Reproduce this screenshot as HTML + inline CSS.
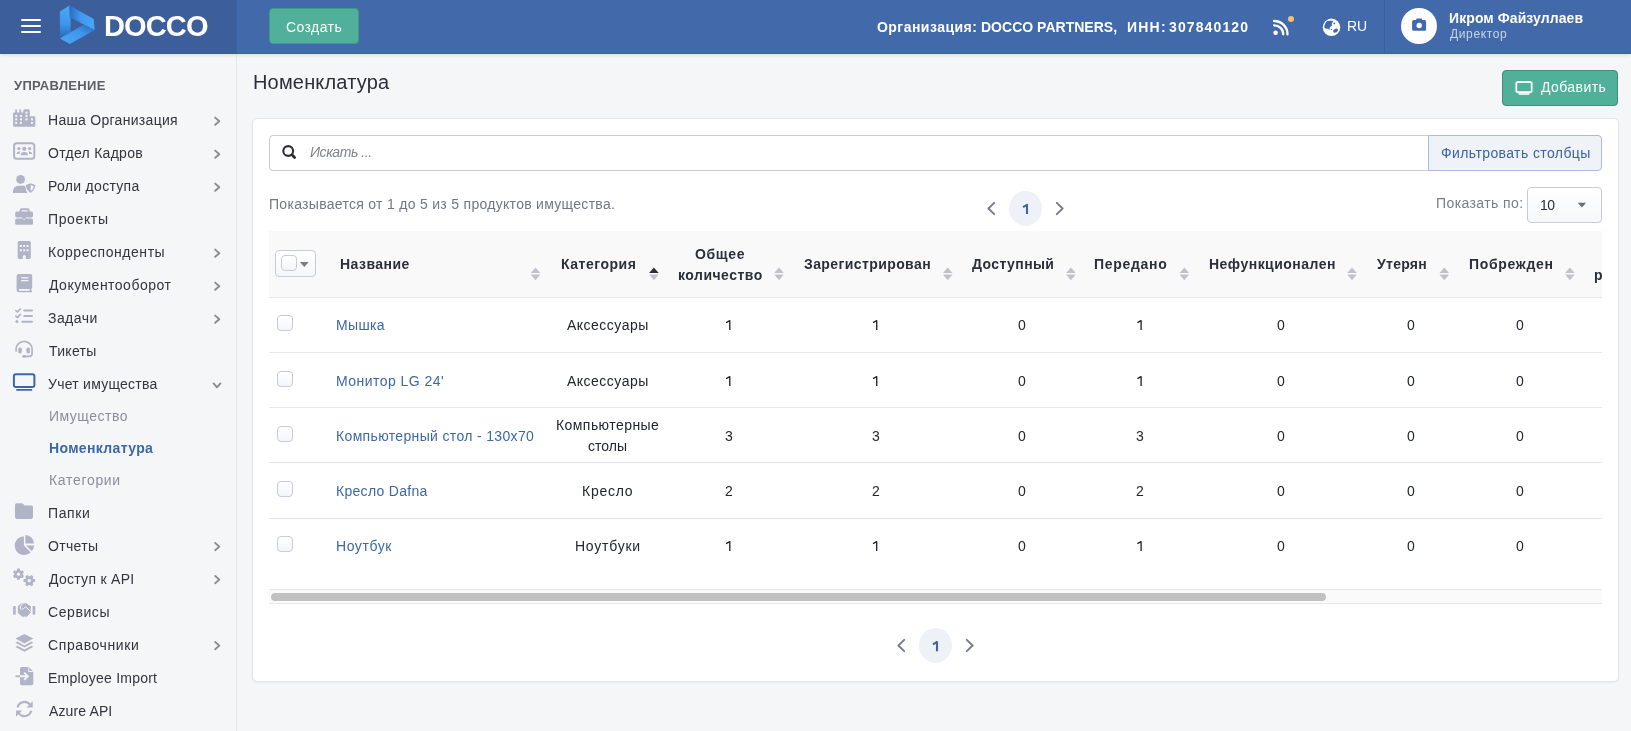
<!DOCTYPE html>
<html><head><meta charset="utf-8"><style>
html,body{margin:0;padding:0;width:1631px;height:731px;overflow:hidden;background:#f5f6f8;font-family:'Liberation Sans', sans-serif}
body>div{position:absolute}
body>svg{position:absolute}
.t{will-change:transform}
</style></head><body>
<div style="left:0px;top:54px;width:236px;height:677px;background:#f5f6f8"></div>
<div style="left:236px;top:54px;width:1px;height:677px;background:#e6e7eb"></div>
<div style="left:0px;top:0px;width:1631px;height:54px;background:#426aab;box-shadow:0 1px 4px rgba(0,0,0,.12)"></div>
<div style="left:0px;top:53px;width:1631px;height:1px;background:#3762a6"></div>
<div style="left:0px;top:0px;width:237px;height:53px;background:#3c5f9b"></div>
<div style="left:0px;top:53px;width:237px;height:1px;background:#365b97"></div>
<div style="left:21px;top:19px;width:20px;height:2px;background:#fff;border-radius:1px"></div>
<div style="left:21px;top:25px;width:20px;height:2px;background:#fff;border-radius:1px"></div>
<div style="left:21px;top:31px;width:20px;height:2px;background:#fff;border-radius:1px"></div>
<div style="left:269px;top:8px;width:90px;height:36px;background:#50b09a;border:1px solid #409a84;border-radius:4px;box-sizing:border-box"></div>
<div style="left:1384px;top:0px;width:1px;height:53px;background:#3a5f9d"></div>
<div style="left:1401px;top:8px;width:36px;height:36px;background:#fff;border-radius:50%"></div>
<div style="left:1502px;top:70px;width:116px;height:36px;background:#50b09a;border:1px solid #3e8e7a;border-radius:4px;box-sizing:border-box"></div>
<div style="left:252px;top:118px;width:1367px;height:564px;background:#fff;border:1px solid #e3e5ea;border-radius:5px;box-sizing:border-box;box-shadow:0 1px 2px rgba(0,0,0,.05)"></div>
<div style="left:269px;top:135px;width:1160px;height:36px;background:#fff;border:1px solid #c9cbd8;border-radius:4px 0 0 4px;box-sizing:border-box"></div>
<div style="left:1428px;top:135px;width:174px;height:36px;background:#eff2f7;border:1px solid #a9bcd9;border-radius:0 4px 4px 0;box-sizing:border-box"></div>
<div style="left:1009px;top:191px;width:33px;height:35px;background:#eef1f7;border-radius:50%"></div>
<div style="left:1527px;top:187px;width:75px;height:36px;background:linear-gradient(#fff,#f6f7fa);border:1px solid #c9cbd8;border-radius:4px;box-sizing:border-box"></div>
<div style="left:269px;top:231px;width:1333px;height:66px;background:#f9f9fa"></div>
<div style="left:269px;top:297px;width:1333px;height:1px;background:#e6e8ee"></div>
<div style="left:269px;top:352px;width:1333px;height:1px;background:#e6e8ee"></div>
<div style="left:277px;top:315px;width:16px;height:16px;background:linear-gradient(#fff,#f4f5f9);border:1px solid #c9cbd8;border-radius:4px;box-sizing:border-box"></div>
<div style="left:269px;top:407px;width:1333px;height:1px;background:#e6e8ee"></div>
<div style="left:277px;top:371px;width:16px;height:16px;background:linear-gradient(#fff,#f4f5f9);border:1px solid #c9cbd8;border-radius:4px;box-sizing:border-box"></div>
<div style="left:269px;top:462px;width:1333px;height:1px;background:#e6e8ee"></div>
<div style="left:277px;top:426px;width:16px;height:16px;background:linear-gradient(#fff,#f4f5f9);border:1px solid #c9cbd8;border-radius:4px;box-sizing:border-box"></div>
<div style="left:269px;top:518px;width:1333px;height:1px;background:#e6e8ee"></div>
<div style="left:277px;top:481px;width:16px;height:16px;background:linear-gradient(#fff,#f4f5f9);border:1px solid #c9cbd8;border-radius:4px;box-sizing:border-box"></div>
<div style="left:277px;top:536px;width:16px;height:16px;background:linear-gradient(#fff,#f4f5f9);border:1px solid #c9cbd8;border-radius:4px;box-sizing:border-box"></div>
<div style="left:269px;top:589px;width:1333px;height:15px;background:#fafafa;border-top:1px solid #e8e8e8;border-bottom:1px solid #e8e8e8;box-sizing:border-box"></div>
<div style="left:271px;top:593px;width:1055px;height:8px;background:#c1c1c1;border-radius:4px"></div>
<div style="left:919px;top:628px;width:33px;height:35px;background:#eef1f7;border-radius:50%"></div>
<div style="left:275px;top:250px;width:41px;height:27px;background:linear-gradient(#fff,#f6f7fa);border:1px solid #c9cbd8;border-radius:4px;box-sizing:border-box"></div>
<div style="left:281px;top:255px;width:16px;height:16px;background:linear-gradient(#fff,#f4f5f9);border:1px solid #c9cbd8;border-radius:4px;box-sizing:border-box"></div>
<svg width="1631" height="731" viewBox="0 0 1631 731" style="left:0;top:0"><path d="M729.80 330.00 L729.80 320.60 L726.10 322.70" fill="none" stroke="#23262e" stroke-width="1.35" stroke-linejoin="round"/><path d="M876.70 330.00 L876.70 320.60 L873.00 322.70" fill="none" stroke="#23262e" stroke-width="1.35" stroke-linejoin="round"/><path d="M1141.10 330.00 L1141.10 320.60 L1137.40 322.70" fill="none" stroke="#23262e" stroke-width="1.35" stroke-linejoin="round"/><path d="M729.80 386.00 L729.80 376.60 L726.10 378.70" fill="none" stroke="#23262e" stroke-width="1.35" stroke-linejoin="round"/><path d="M876.70 386.00 L876.70 376.60 L873.00 378.70" fill="none" stroke="#23262e" stroke-width="1.35" stroke-linejoin="round"/><path d="M1141.10 386.00 L1141.10 376.60 L1137.40 378.70" fill="none" stroke="#23262e" stroke-width="1.35" stroke-linejoin="round"/><path d="M729.80 551.00 L729.80 541.60 L726.10 543.70" fill="none" stroke="#23262e" stroke-width="1.35" stroke-linejoin="round"/><path d="M876.70 551.00 L876.70 541.60 L873.00 543.70" fill="none" stroke="#23262e" stroke-width="1.35" stroke-linejoin="round"/><path d="M1141.10 551.00 L1141.10 541.60 L1137.40 543.70" fill="none" stroke="#23262e" stroke-width="1.35" stroke-linejoin="round"/><path d="M1027.00 214.10 L1027.00 204.80 L1023.00 207.10" fill="none" stroke="#3d64a3" stroke-width="2.1" stroke-linejoin="round"/><path d="M937.00 651.30 L937.00 642.00 L933.00 644.30" fill="none" stroke="#3d64a3" stroke-width="2.1" stroke-linejoin="round"/></svg>
<svg width="1631" height="731" viewBox="0 0 1631 731" style="left:0;top:0"><defs>
<linearGradient id="gL" x1="0" y1="0" x2="0" y2="1"><stop offset="0" stop-color="#4aa8f6"/><stop offset="0.55" stop-color="#3f95ee"/><stop offset="1" stop-color="#2868b8"/></linearGradient>
<linearGradient id="gT" x1="0" y1="0" x2="1" y2="0"><stop offset="0" stop-color="#2a6cbf"/><stop offset="0.45" stop-color="#3f97f0"/><stop offset="1" stop-color="#4aa8f6"/></linearGradient>
<linearGradient id="gB" x1="0" y1="1" x2="1" y2="0"><stop offset="0" stop-color="#4aa8f6"/><stop offset="0.6" stop-color="#3f95ee"/><stop offset="1" stop-color="#2868b8"/></linearGradient>
</defs><g stroke-linejoin="round"><path d="M60.3 11.6 L69.4 6.1 L70.2 6.4 L70.2 32.5 L60.4 38.3 Z" fill="url(#gL)" stroke="url(#gL)" stroke-width="0.8"/><path d="M69.6 5.9 L93.4 19.2 L94.1 29.8 L70.2 16.8 Z" fill="url(#gT)" stroke="url(#gT)" stroke-width="0.8"/><path d="M60.6 38.4 L83.7 25.1 L94.0 30.0 L69.8 43.6 Z" fill="url(#gB)" stroke="url(#gB)" stroke-width="0.8"/></g><circle cx="1275.6" cy="32.8" r="2.3" fill="#fff"/><path d="M1274.1 25.3 A8.9 8.9 0 0 1 1283.2 34.4" fill="none" stroke="#fff" stroke-width="2.3" stroke-linecap="round"/><path d="M1274.1 21.0 A13.2 13.2 0 0 1 1287.5 34.4" fill="none" stroke="#fff" stroke-width="2.3" stroke-linecap="round"/><circle cx="1291" cy="19.1" r="3" fill="#f2c46d"/><circle cx="1331.5" cy="27.3" r="8.7" fill="#fff"/><path d="M1324.5 28.0 C1324.3 26.2 1324.6 24.6 1325.3 23.5 C1326.0 22.2 1326.8 21.5 1327.8 21.1 C1329.6 20.6 1331.6 20.6 1333.3 21.0 L1332.0 23.2 L1331.8 25.4 L1330.0 27.3 L1329.2 30.2 L1328.3 28.8 L1326.6 28.8 Z" fill="#426aab"/><circle cx="1334.3" cy="23.4" r="0.9" fill="#426aab"/><circle cx="1331.4" cy="29.4" r="0.7" fill="#426aab"/><ellipse cx="1335.6" cy="30.6" rx="2.6" ry="1.8" transform="rotate(-25 1335.6 30.6)" fill="#426aab"/><rect x="1412.1" y="20.1" width="14" height="10.7" rx="1.6" fill="#426aab"/><rect x="1416.2" y="18.6" width="5.9" height="3" rx="1" fill="#426aab"/><circle cx="1419.2" cy="25.5" r="2.7" fill="#fff"/><g fill="#b0b4c6"><path d="M13.1 113.2 Q13.1 112.5 13.8 112.5 L15.2 112.5 L15.2 109.6 L17.0 109.6 L17.0 112.5 L19.3 112.5 L19.3 109.6 L21.1 109.6 L21.1 112.5 L23.2 112.5 L23.2 110.8 Q23.2 109.3 24.7 109.3 L28.3 109.3 Q29.8 109.3 29.8 110.8 L29.8 116.2 L34.0 116.2 Q35.3 116.2 35.3 117.5 L35.3 125.5 Q35.3 126.8 34.0 126.8 L14.4 126.8 Q13.1 126.8 13.1 125.5 Z"/><rect x="15.2" y="114.9" width="2" height="2" fill="#f5f6f8"/><rect x="20" y="114.9" width="2" height="2" fill="#f5f6f8"/><rect x="15.2" y="118.4" width="2" height="2" fill="#f5f6f8"/><rect x="20" y="118.4" width="2" height="2" fill="#f5f6f8"/><rect x="15.2" y="121.9" width="2" height="2" fill="#f5f6f8"/><rect x="20" y="121.9" width="2" height="2" fill="#f5f6f8"/><rect x="25.5" y="111.6" width="2" height="2" fill="#f5f6f8"/><rect x="25.5" y="114.9" width="2" height="2" fill="#f5f6f8"/><rect x="25.5" y="118.4" width="2" height="2" fill="#f5f6f8"/><rect x="31" y="118.4" width="2" height="2" fill="#f5f6f8"/><rect x="31" y="121.9" width="2" height="2" fill="#f5f6f8"/><rect x="14.1" y="143.2" width="20.2" height="15.6" rx="2.6" fill="none" stroke="#b0b4c6" stroke-width="2"/><circle cx="18.9" cy="148.6" r="1.6"/><circle cx="24.3" cy="148.8" r="2.1"/><circle cx="29.6" cy="148.6" r="1.6"/><path d="M20.6 155.3 Q20.6 151.9 24.3 151.9 Q28.0 151.9 28.0 155.3 Z"/><path d="M16.3 154.0 Q16.6 151.6 19.0 151.5 L20.4 151.6 Q19.6 152.6 19.5 154.0 Z"/><path d="M32.3 154.0 Q32.0 151.6 29.6 151.5 L28.2 151.6 Q29.0 152.6 29.1 154.0 Z"/><circle cx="20.6" cy="179.4" r="4.4"/><path d="M12.9 193 Q12.9 185.8 18.6 185.8 L23.6 185.8 Q25.4 185.8 26.6 186.6 L26.0 187.0 Q25.9 191.5 27.6 193 Z"/><path d="M30.6 182.2 L36.2 184.4 Q36.3 190.5 30.6 193.9 Q24.9 190.5 25.0 184.4 Z" fill="#f5f6f8"/><path d="M30.6 183.3 L35.3 185.1 Q35.3 190.0 30.6 193.0 Q25.9 190.0 25.9 185.1 Z"/><path d="M30.6 185.0 L30.6 191.2 Q33.6 189.2 33.7 186.2 Z" fill="#f5f6f8"/><path d="M20.6 212 L20.6 210.2 Q20.6 209.2 21.6 209.2 L27.6 209.2 Q28.6 209.2 28.6 210.2 L28.6 212" fill="none" stroke="#b0b4c6" stroke-width="2"/><rect x="15.2" y="211.5" width="17.8" height="5.9" rx="1.6"/><rect x="15.2" y="218.6" width="17.8" height="6.2" rx="1.6"/><rect x="22.4" y="217" width="3.4" height="2.8" rx="0.4"/><rect x="23.2" y="218.6" width="1.8" height="0.9" fill="#f5f6f8"/><path d="M17.7 242.6 Q17.7 241.1 19.2 241.1 L29.3 241.1 Q30.8 241.1 30.8 242.6 L30.8 257.6 Q30.8 259 29.4 259 L25.8 259 L25.8 256.4 Q25.8 254.9 24.3 254.9 Q22.8 254.9 22.8 256.4 L22.8 259 L19.1 259 Q17.7 259 17.7 257.6 Z"/><rect x="19.8" y="245" width="2" height="2" rx="0.3" fill="#f5f6f8"/><rect x="23.2" y="245" width="2" height="2" rx="0.3" fill="#f5f6f8"/><rect x="26.6" y="245" width="2" height="2" rx="0.3" fill="#f5f6f8"/><rect x="19.8" y="249.3" width="2" height="2" rx="0.3" fill="#f5f6f8"/><rect x="23.2" y="249.3" width="2" height="2" rx="0.3" fill="#f5f6f8"/><rect x="26.6" y="249.3" width="2" height="2" rx="0.3" fill="#f5f6f8"/><path d="M18.8 273.9 L30.4 273.9 Q32.2 273.9 32.2 275.7 L32.2 287.4 Q32.2 288.4 31.3 288.7 L31.3 290.5 Q32.2 290.9 32.2 291.4 Q32.2 292.2 31.4 292.2 L19.4 292.2 Q16.6 292.2 16.6 289.4 L16.6 276.1 Q16.6 273.9 18.8 273.9 Z"/><rect x="19.0" y="289.0" width="10.6" height="1.8" fill="#f5f6f8"/><rect x="21.0" y="277.3" width="7.6" height="1.2" rx="0.6" fill="#f5f6f8"/><rect x="21.0" y="280.0" width="7.6" height="1.2" rx="0.6" fill="#f5f6f8"/><g fill="none" stroke="#b0b4c6" stroke-width="1.7" stroke-linecap="round" stroke-linejoin="round"><path d="M15.9 310.6 L17.4 312.0 L20.4 308.8"/><path d="M15.9 316.2 L17.4 317.6 L20.4 314.4"/></g><circle cx="16.9" cy="321.6" r="1.5"/><g stroke="#b0b4c6" stroke-width="2" stroke-linecap="round"><line x1="24.2" y1="310.5" x2="32" y2="310.5"/><line x1="24.2" y1="316.1" x2="32" y2="316.1"/><line x1="22.2" y1="321.7" x2="32" y2="321.7"/></g><path d="M16.1 350.9 L16.1 349.3 A8 8 0 0 1 32.1 349.3 L32.1 353.6 Q32.1 356.4 29.3 356.4 L25 356.4" fill="none" stroke="#b0b4c6" stroke-width="1.7" stroke-linecap="round"/><rect x="18.2" y="347.5" width="3.6" height="5.9" rx="1.6"/><rect x="26.4" y="347.5" width="3.6" height="5.9" rx="1.6"/><ellipse cx="24" cy="356.4" rx="2" ry="1.3"/></g><rect x="13.9" y="374.3" width="20.5" height="12.6" rx="2" fill="none" stroke="#3d68a8" stroke-width="2"/><line x1="17" y1="389.9" x2="31.4" y2="389.9" stroke="#3d68a8" stroke-width="1.8" stroke-linecap="round"/><g fill="#b0b4c6"><path d="M15 505 Q15 503.2 16.8 503.2 L21.6 503.2 Q22.4 503.2 23.0 503.8 L24.6 505.4 L31.2 505.4 Q33 505.4 33 507.2 L33 517.1 Q33 518.9 31.2 518.9 L16.8 518.9 Q15 518.9 15 517.1 Z"/><path d="M23.9 536.4 L23.9 545.6 L30.6 552.3 A9.3 9.3 0 1 1 23.9 536.4 Z"/><path d="M25.4 535 A8.6 8.6 0 0 1 34.0 543.6 L25.4 543.6 Z"/><path d="M26.0 545.4 L34.2 545.4 A8.8 8.8 0 0 1 31.6 551.0 Z"/><circle cx="18.5" cy="574.2" r="4.14"/><rect x="17.00" y="568.60" width="3" height="11.20" rx="0.7" transform="rotate(0 18.5 574.2)"/><rect x="17.00" y="568.60" width="3" height="11.20" rx="0.7" transform="rotate(60 18.5 574.2)"/><rect x="17.00" y="568.60" width="3" height="11.20" rx="0.7" transform="rotate(120 18.5 574.2)"/><circle cx="18.5" cy="574.2" r="1.6" fill="#f5f6f8"/><circle cx="29.3" cy="580.6" r="4.29"/><rect x="27.80" y="574.80" width="3" height="11.60" rx="0.7" transform="rotate(30 29.3 580.6)"/><rect x="27.80" y="574.80" width="3" height="11.60" rx="0.7" transform="rotate(90 29.3 580.6)"/><rect x="27.80" y="574.80" width="3" height="11.60" rx="0.7" transform="rotate(150 29.3 580.6)"/><circle cx="29.3" cy="580.6" r="1.7" fill="#f5f6f8"/><rect x="13.1" y="605.9" width="2.6" height="8.8" rx="0.7"/><rect x="32.6" y="605.9" width="2.7" height="8.8" rx="0.7"/><path d="M17.9 606.2 L21.2 603.6 L26.2 603.3 L30.8 606.2 L30.8 612.2 L28.6 614.9 L26.8 616.8 L24.4 616.4 L22.6 616.9 L17.9 613.0 Z"/><path d="M22.8 603.6 Q19.4 606.2 20.4 608.9 Q21.4 610.0 23.4 608.6 L25.6 606.8 L30.6 611.4" fill="none" stroke="#f5f6f8" stroke-width="1.0"/><path d="M24.4 633.9 L33.3 638.6 L24.4 643.4 L15.5 638.6 Z"/><path d="M17.4 641.6 L24.4 645.4 L31.4 641.6 L33.3 642.7 L24.4 647.5 L15.5 642.7 Z"/><path d="M17.4 645.8 L24.4 649.6 L31.4 645.8 L33.3 646.9 L24.4 651.8 L15.5 646.9 Z"/><path d="M21.5 667 L28.4 667 L33.3 671.9 L33.3 683.4 Q33.3 685.2 31.5 685.2 L21.8 685.2 Q20 685.2 20 683.4 L20 677.3 L25.5 677.3 L23.5 679.3 L24.8 680.6 L29.1 676.3 L24.8 672.0 L23.5 673.3 L25.5 675.3 L20 675.3 L20 668.5 Q20 667 21.5 667 Z"/><path d="M28.4 667 L28.4 671.9 L33.3 671.9 Z" fill="#f5f6f8"/><path d="M29.3 667.6 L32.7 671.0 L29.3 671.0 Z"/><rect x="15.5" y="675.4" width="4.5" height="1.8"/><g fill="none" stroke="#b0b4c6" stroke-width="2.2"><path d="M17.6 707.4 A7 7 0 0 1 30.2 705.0"/><path d="M31.2 710.8 A7 7 0 0 1 18.6 713.0"/></g><path d="M32.7 701.2 L32.7 707.4 L26.6 707.4 Z"/><path d="M16 716.8 L16 710.6 L22.1 710.6 Z"/></g><path d="M215.2 117.6 L219.3 121.2 L215.2 124.8" fill="none" stroke="#8c8c8c" stroke-width="1.9" stroke-linecap="round" stroke-linejoin="round"/><path d="M215.2 150.6 L219.3 154.2 L215.2 157.8" fill="none" stroke="#8c8c8c" stroke-width="1.9" stroke-linecap="round" stroke-linejoin="round"/><path d="M215.2 183.6 L219.3 187.2 L215.2 190.8" fill="none" stroke="#8c8c8c" stroke-width="1.9" stroke-linecap="round" stroke-linejoin="round"/><path d="M215.2 249.6 L219.3 253.2 L215.2 256.8" fill="none" stroke="#8c8c8c" stroke-width="1.9" stroke-linecap="round" stroke-linejoin="round"/><path d="M215.2 282.6 L219.3 286.2 L215.2 289.8" fill="none" stroke="#8c8c8c" stroke-width="1.9" stroke-linecap="round" stroke-linejoin="round"/><path d="M215.2 315.6 L219.3 319.2 L215.2 322.8" fill="none" stroke="#8c8c8c" stroke-width="1.9" stroke-linecap="round" stroke-linejoin="round"/><path d="M215.2 543.0 L219.3 546.6 L215.2 550.2" fill="none" stroke="#8c8c8c" stroke-width="1.9" stroke-linecap="round" stroke-linejoin="round"/><path d="M215.2 576.0 L219.3 579.6 L215.2 583.2" fill="none" stroke="#8c8c8c" stroke-width="1.9" stroke-linecap="round" stroke-linejoin="round"/><path d="M215.2 642.0 L219.3 645.6 L215.2 649.2" fill="none" stroke="#8c8c8c" stroke-width="1.9" stroke-linecap="round" stroke-linejoin="round"/><path d="M213.6 383.4 L217.0 387.3 L220.4 383.4" fill="none" stroke="#8c8c8c" stroke-width="1.9" stroke-linecap="round" stroke-linejoin="round"/><circle cx="288.2" cy="151.0" r="4.9" fill="none" stroke="#2c2f3a" stroke-width="2.1"/><line x1="292" y1="154.8" x2="294.6" y2="157.4" stroke="#2c2f3a" stroke-width="2.8" stroke-linecap="round"/><path d="M994.2 202.9 L988.4 208.5 L994.2 214.1" fill="none" stroke="#7a7d8b" stroke-width="2" stroke-linecap="round" stroke-linejoin="round"/><path d="M904.2 639.9 L898.4 645.5 L904.2 651.1" fill="none" stroke="#7a7d8b" stroke-width="2" stroke-linecap="round" stroke-linejoin="round"/><path d="M1056.8 202.9 L1062.6 208.5 L1056.8 214.1" fill="none" stroke="#7a7d8b" stroke-width="2" stroke-linecap="round" stroke-linejoin="round"/><path d="M966.8 639.9 L972.6 645.5 L966.8 651.1" fill="none" stroke="#7a7d8b" stroke-width="2" stroke-linecap="round" stroke-linejoin="round"/><path d="M1577.7 202.8 L1586.1 202.8 L1581.9 207.4 Z" fill="#6b6e7a"/><path d="M299.9 262.1 L308.7 262.1 L304.3 267.1 Z" fill="#7a7d8b"/><path d="M530.7 272.9 L540.3 272.9 L535.5 267.4 Z" fill="#c1c2c9"/><path d="M530.7 274.6 L540.3 274.6 L535.5 280.2 Z" fill="#c1c2c9"/><path d="M649.1 272.9 L658.6999999999999 272.9 L653.9 267.4 Z" fill="#2c2f3a"/><path d="M649.1 274.6 L658.6999999999999 274.6 L653.9 280.2 Z" fill="#c1c2c9"/><path d="M774.2 272.9 L783.8 272.9 L779.0 267.4 Z" fill="#c1c2c9"/><path d="M774.2 274.6 L783.8 274.6 L779.0 280.2 Z" fill="#c1c2c9"/><path d="M942.9000000000001 272.9 L952.5 272.9 L947.7 267.4 Z" fill="#c1c2c9"/><path d="M942.9000000000001 274.6 L952.5 274.6 L947.7 280.2 Z" fill="#c1c2c9"/><path d="M1066.1000000000001 272.9 L1075.7 272.9 L1070.9 267.4 Z" fill="#c1c2c9"/><path d="M1066.1000000000001 274.6 L1075.7 274.6 L1070.9 280.2 Z" fill="#c1c2c9"/><path d="M1179.5 272.9 L1189.1 272.9 L1184.3 267.4 Z" fill="#c1c2c9"/><path d="M1179.5 274.6 L1189.1 274.6 L1184.3 280.2 Z" fill="#c1c2c9"/><path d="M1347.2 272.9 L1356.8 272.9 L1352.0 267.4 Z" fill="#c1c2c9"/><path d="M1347.2 274.6 L1356.8 274.6 L1352.0 280.2 Z" fill="#c1c2c9"/><path d="M1439.5 272.9 L1449.1 272.9 L1444.3 267.4 Z" fill="#c1c2c9"/><path d="M1439.5 274.6 L1449.1 274.6 L1444.3 280.2 Z" fill="#c1c2c9"/><path d="M1565.1000000000001 272.9 L1574.7 272.9 L1569.9 267.4 Z" fill="#c1c2c9"/><path d="M1565.1000000000001 274.6 L1574.7 274.6 L1569.9 280.2 Z" fill="#c1c2c9"/><rect x="1516.3" y="82" width="15.4" height="10.2" rx="1.8" fill="none" stroke="#fff" stroke-width="1.8"/><line x1="1518.6" y1="94" x2="1529.4" y2="94" stroke="#fff" stroke-width="1.6"/></svg>
<div class="t" style="left:103.90px;top:12px;color:#fff;font-family:'Liberation Sans', sans-serif;font-size:29px;line-height:29px;font-weight:700;letter-spacing:-0.875px;white-space:pre;">DOCCO</div>
<div class="t" style="left:285.70px;top:20px;color:#fff;font-family:'Liberation Sans', sans-serif;font-size:14px;line-height:14px;font-weight:400;letter-spacing:0.417px;white-space:pre;">Создать</div>
<div class="t" style="left:877.00px;top:20px;color:#fff;font-family:'Liberation Sans', sans-serif;font-size:14px;line-height:14px;font-weight:700;letter-spacing:0.464px;white-space:pre;">Организация:</div>
<div class="t" style="left:980.80px;top:20px;color:#fff;font-family:'Liberation Sans', sans-serif;font-size:14px;line-height:14px;font-weight:700;letter-spacing:0.014px;white-space:pre;">DOCCO PARTNERS,</div>
<div class="t" style="left:1126.80px;top:20px;color:#fff;font-family:'Liberation Sans', sans-serif;font-size:14px;line-height:14px;font-weight:700;letter-spacing:1.200px;white-space:pre;">ИНН:</div>
<div class="t" style="left:1168.70px;top:20px;color:#fff;font-family:'Liberation Sans', sans-serif;font-size:14px;line-height:14px;font-weight:700;letter-spacing:1.113px;white-space:pre;">307840120</div>
<div class="t" style="left:1347.40px;top:19px;color:#fff;font-family:'Liberation Sans', sans-serif;font-size:14px;line-height:14px;font-weight:400;letter-spacing:0.000px;white-space:pre;">RU</div>
<div class="t" style="left:1448.60px;top:11px;color:#fff;font-family:'Liberation Sans', sans-serif;font-size:14px;line-height:14px;font-weight:700;letter-spacing:0.087px;white-space:pre;">Икром Файзуллаев</div>
<div class="t" style="left:1449.60px;top:28px;color:#c9d4e9;font-family:'Liberation Sans', sans-serif;font-size:12px;line-height:12px;font-weight:400;letter-spacing:0.629px;white-space:pre;">Директор</div>
<div class="t" style="left:13.90px;top:79px;color:#5d5f66;font-family:'Liberation Sans', sans-serif;font-size:13px;line-height:13px;font-weight:700;letter-spacing:0.300px;white-space:pre;">УПРАВЛЕНИЕ</div>
<div class="t" style="left:47.90px;top:113px;color:#32353d;font-family:'Liberation Sans', sans-serif;font-size:14px;line-height:14px;font-weight:400;letter-spacing:0.293px;white-space:pre;">Наша Организация</div>
<div class="t" style="left:47.90px;top:146px;color:#32353d;font-family:'Liberation Sans', sans-serif;font-size:14px;line-height:14px;font-weight:400;letter-spacing:0.291px;white-space:pre;">Отдел Кадров</div>
<div class="t" style="left:47.90px;top:179px;color:#32353d;font-family:'Liberation Sans', sans-serif;font-size:14px;line-height:14px;font-weight:400;letter-spacing:0.300px;white-space:pre;">Роли доступа</div>
<div class="t" style="left:47.90px;top:212px;color:#32353d;font-family:'Liberation Sans', sans-serif;font-size:14px;line-height:14px;font-weight:400;letter-spacing:0.633px;white-space:pre;">Проекты</div>
<div class="t" style="left:47.90px;top:245px;color:#32353d;font-family:'Liberation Sans', sans-serif;font-size:14px;line-height:14px;font-weight:400;letter-spacing:0.546px;white-space:pre;">Корреспонденты</div>
<div class="t" style="left:48.90px;top:278px;color:#32353d;font-family:'Liberation Sans', sans-serif;font-size:14px;line-height:14px;font-weight:400;letter-spacing:0.486px;white-space:pre;">Документооборот</div>
<div class="t" style="left:47.90px;top:311px;color:#32353d;font-family:'Liberation Sans', sans-serif;font-size:14px;line-height:14px;font-weight:400;letter-spacing:0.440px;white-space:pre;">Задачи</div>
<div class="t" style="left:48.90px;top:344px;color:#32353d;font-family:'Liberation Sans', sans-serif;font-size:14px;line-height:14px;font-weight:400;letter-spacing:0.300px;white-space:pre;">Тикеты</div>
<div class="t" style="left:47.90px;top:377px;color:#32353d;font-family:'Liberation Sans', sans-serif;font-size:14px;line-height:14px;font-weight:400;letter-spacing:0.254px;white-space:pre;">Учет имущества</div>
<div class="t" style="left:48.50px;top:409px;color:#8b8e9c;font-family:'Liberation Sans', sans-serif;font-size:14px;line-height:14px;font-weight:400;letter-spacing:0.500px;white-space:pre;">Имущество</div>
<div class="t" style="left:48.50px;top:441px;color:#3d68a8;font-family:'Liberation Sans', sans-serif;font-size:14px;line-height:14px;font-weight:700;letter-spacing:0.345px;white-space:pre;">Номенклатура</div>
<div class="t" style="left:48.50px;top:473px;color:#8b8e9c;font-family:'Liberation Sans', sans-serif;font-size:14px;line-height:14px;font-weight:400;letter-spacing:0.688px;white-space:pre;">Категории</div>
<div class="t" style="left:47.80px;top:506px;color:#32353d;font-family:'Liberation Sans', sans-serif;font-size:14px;line-height:14px;font-weight:400;letter-spacing:0.600px;white-space:pre;">Папки</div>
<div class="t" style="left:47.80px;top:539px;color:#32353d;font-family:'Liberation Sans', sans-serif;font-size:14px;line-height:14px;font-weight:400;letter-spacing:0.340px;white-space:pre;">Отчеты</div>
<div class="t" style="left:48.80px;top:572px;color:#32353d;font-family:'Liberation Sans', sans-serif;font-size:14px;line-height:14px;font-weight:400;letter-spacing:0.282px;white-space:pre;">Доступ к API</div>
<div class="t" style="left:47.80px;top:605px;color:#32353d;font-family:'Liberation Sans', sans-serif;font-size:14px;line-height:14px;font-weight:400;letter-spacing:0.583px;white-space:pre;">Сервисы</div>
<div class="t" style="left:47.80px;top:638px;color:#32353d;font-family:'Liberation Sans', sans-serif;font-size:14px;line-height:14px;font-weight:400;letter-spacing:0.600px;white-space:pre;">Справочники</div>
<div class="t" style="left:47.80px;top:671px;color:#32353d;font-family:'Liberation Sans', sans-serif;font-size:14px;line-height:14px;font-weight:400;letter-spacing:0.221px;white-space:pre;">Employee Import</div>
<div class="t" style="left:48.80px;top:704px;color:#32353d;font-family:'Liberation Sans', sans-serif;font-size:14px;line-height:14px;font-weight:400;letter-spacing:0.125px;white-space:pre;">Azure API</div>
<div class="t" style="left:252.80px;top:72px;color:#2c2f3a;font-family:'Liberation Sans', sans-serif;font-size:20px;line-height:20px;font-weight:400;letter-spacing:0.173px;white-space:pre;">Номенклатура</div>
<div class="t" style="left:1540.80px;top:80px;color:#fff;font-family:'Liberation Sans', sans-serif;font-size:14px;line-height:14px;font-weight:400;letter-spacing:0.414px;white-space:pre;">Добавить</div>
<div class="t" style="left:310.20px;top:145px;color:#80838f;font-family:'Liberation Sans', sans-serif;font-size:14px;line-height:14px;font-weight:400;letter-spacing:-0.433px;white-space:pre;font-style:italic">Искать ...</div>
<div class="t" style="left:1440.60px;top:146px;color:#3b64a5;font-family:'Liberation Sans', sans-serif;font-size:14px;line-height:14px;font-weight:400;letter-spacing:0.394px;white-space:pre;">Фильтровать столбцы</div>
<div class="t" style="left:268.80px;top:197px;color:#737687;font-family:'Liberation Sans', sans-serif;font-size:14px;line-height:14px;font-weight:400;letter-spacing:0.294px;white-space:pre;">Показывается от 1 до 5 из 5 продуктов имущества.</div>
<div class="t" style="left:1436.10px;top:196px;color:#7a7d8b;font-family:'Liberation Sans', sans-serif;font-size:14px;line-height:14px;font-weight:400;letter-spacing:0.400px;white-space:pre;">Показать по:</div>
<div class="t" style="left:1539.60px;top:198px;color:#2c2f3a;font-family:'Liberation Sans', sans-serif;font-size:14px;line-height:14px;font-weight:400;letter-spacing:-0.500px;white-space:pre;">10</div>
<div class="t" style="left:339.70px;top:257px;color:#2c2f3a;font-family:'Liberation Sans', sans-serif;font-size:14px;line-height:14px;font-weight:700;letter-spacing:0.471px;white-space:pre;">Название</div>
<div class="t" style="left:560.50px;top:257px;color:#2c2f3a;font-family:'Liberation Sans', sans-serif;font-size:14px;line-height:14px;font-weight:700;letter-spacing:0.525px;white-space:pre;">Категория</div>
<div class="t" style="left:694.50px;top:247px;color:#2c2f3a;font-family:'Liberation Sans', sans-serif;font-size:14px;line-height:14px;font-weight:700;letter-spacing:0.625px;white-space:pre;">Общее</div>
<div class="t" style="left:677.80px;top:268px;color:#2c2f3a;font-family:'Liberation Sans', sans-serif;font-size:14px;line-height:14px;font-weight:700;letter-spacing:0.489px;white-space:pre;">количество</div>
<div class="t" style="left:803.80px;top:257px;color:#2c2f3a;font-family:'Liberation Sans', sans-serif;font-size:14px;line-height:14px;font-weight:700;letter-spacing:0.407px;white-space:pre;">Зарегистрирован</div>
<div class="t" style="left:971.50px;top:257px;color:#2c2f3a;font-family:'Liberation Sans', sans-serif;font-size:14px;line-height:14px;font-weight:700;letter-spacing:0.400px;white-space:pre;">Доступный</div>
<div class="t" style="left:1094.40px;top:257px;color:#2c2f3a;font-family:'Liberation Sans', sans-serif;font-size:14px;line-height:14px;font-weight:700;letter-spacing:0.700px;white-space:pre;">Передано</div>
<div class="t" style="left:1208.70px;top:257px;color:#2c2f3a;font-family:'Liberation Sans', sans-serif;font-size:14px;line-height:14px;font-weight:700;letter-spacing:0.485px;white-space:pre;">Нефункционален</div>
<div class="t" style="left:1376.80px;top:257px;color:#2c2f3a;font-family:'Liberation Sans', sans-serif;font-size:14px;line-height:14px;font-weight:700;letter-spacing:0.280px;white-space:pre;">Утерян</div>
<div class="t" style="left:1468.50px;top:257px;color:#2c2f3a;font-family:'Liberation Sans', sans-serif;font-size:14px;line-height:14px;font-weight:700;letter-spacing:0.675px;white-space:pre;">Побрежден</div>
<div class="t" style="left:1593.60px;top:268px;color:#2c2f3a;font-family:'Liberation Sans', sans-serif;font-size:14px;line-height:14px;font-weight:700;letter-spacing:0.000px;white-space:pre;">р</div>
<div class="t" style="left:335.50px;top:318px;color:#3d68a8;font-family:'Liberation Sans', sans-serif;font-size:14px;line-height:14px;font-weight:400;letter-spacing:0.350px;white-space:pre;">Мышка</div>
<div class="t" style="left:566.50px;top:318px;color:#23262e;font-family:'Liberation Sans', sans-serif;font-size:14px;line-height:14px;font-weight:400;letter-spacing:0.489px;white-space:pre;">Аксессуары</div>
<div class="t" style="left:1018.00px;top:318px;color:#23262e;font-family:'Liberation Sans', sans-serif;font-size:14px;line-height:14px;font-weight:400;letter-spacing:0.000px;white-space:pre;">0</div>
<div class="t" style="left:1277.00px;top:318px;color:#23262e;font-family:'Liberation Sans', sans-serif;font-size:14px;line-height:14px;font-weight:400;letter-spacing:0.000px;white-space:pre;">0</div>
<div class="t" style="left:1406.50px;top:318px;color:#23262e;font-family:'Liberation Sans', sans-serif;font-size:14px;line-height:14px;font-weight:400;letter-spacing:0.000px;white-space:pre;">0</div>
<div class="t" style="left:1515.70px;top:318px;color:#23262e;font-family:'Liberation Sans', sans-serif;font-size:14px;line-height:14px;font-weight:400;letter-spacing:0.000px;white-space:pre;">0</div>
<div class="t" style="left:335.50px;top:374px;color:#3d68a8;font-family:'Liberation Sans', sans-serif;font-size:14px;line-height:14px;font-weight:400;letter-spacing:0.454px;white-space:pre;">Монитор LG 24&#x27;</div>
<div class="t" style="left:566.50px;top:374px;color:#23262e;font-family:'Liberation Sans', sans-serif;font-size:14px;line-height:14px;font-weight:400;letter-spacing:0.489px;white-space:pre;">Аксессуары</div>
<div class="t" style="left:1018.00px;top:374px;color:#23262e;font-family:'Liberation Sans', sans-serif;font-size:14px;line-height:14px;font-weight:400;letter-spacing:0.000px;white-space:pre;">0</div>
<div class="t" style="left:1277.00px;top:374px;color:#23262e;font-family:'Liberation Sans', sans-serif;font-size:14px;line-height:14px;font-weight:400;letter-spacing:0.000px;white-space:pre;">0</div>
<div class="t" style="left:1406.50px;top:374px;color:#23262e;font-family:'Liberation Sans', sans-serif;font-size:14px;line-height:14px;font-weight:400;letter-spacing:0.000px;white-space:pre;">0</div>
<div class="t" style="left:1515.70px;top:374px;color:#23262e;font-family:'Liberation Sans', sans-serif;font-size:14px;line-height:14px;font-weight:400;letter-spacing:0.000px;white-space:pre;">0</div>
<div class="t" style="left:335.50px;top:429px;color:#3d68a8;font-family:'Liberation Sans', sans-serif;font-size:14px;line-height:14px;font-weight:400;letter-spacing:0.344px;white-space:pre;">Компьютерный стол - 130x70</div>
<div class="t" style="left:555.50px;top:418px;color:#23262e;font-family:'Liberation Sans', sans-serif;font-size:14px;line-height:14px;font-weight:400;letter-spacing:0.436px;white-space:pre;">Компьютерные</div>
<div class="t" style="left:587.50px;top:439px;color:#23262e;font-family:'Liberation Sans', sans-serif;font-size:14px;line-height:14px;font-weight:400;letter-spacing:0.000px;white-space:pre;">столы</div>
<div class="t" style="left:724.70px;top:429px;color:#23262e;font-family:'Liberation Sans', sans-serif;font-size:14px;line-height:14px;font-weight:400;letter-spacing:0.000px;white-space:pre;">3</div>
<div class="t" style="left:871.60px;top:429px;color:#23262e;font-family:'Liberation Sans', sans-serif;font-size:14px;line-height:14px;font-weight:400;letter-spacing:0.000px;white-space:pre;">3</div>
<div class="t" style="left:1018.00px;top:429px;color:#23262e;font-family:'Liberation Sans', sans-serif;font-size:14px;line-height:14px;font-weight:400;letter-spacing:0.000px;white-space:pre;">0</div>
<div class="t" style="left:1136.00px;top:429px;color:#23262e;font-family:'Liberation Sans', sans-serif;font-size:14px;line-height:14px;font-weight:400;letter-spacing:0.000px;white-space:pre;">3</div>
<div class="t" style="left:1277.00px;top:429px;color:#23262e;font-family:'Liberation Sans', sans-serif;font-size:14px;line-height:14px;font-weight:400;letter-spacing:0.000px;white-space:pre;">0</div>
<div class="t" style="left:1406.50px;top:429px;color:#23262e;font-family:'Liberation Sans', sans-serif;font-size:14px;line-height:14px;font-weight:400;letter-spacing:0.000px;white-space:pre;">0</div>
<div class="t" style="left:1515.70px;top:429px;color:#23262e;font-family:'Liberation Sans', sans-serif;font-size:14px;line-height:14px;font-weight:400;letter-spacing:0.000px;white-space:pre;">0</div>
<div class="t" style="left:335.50px;top:484px;color:#3d68a8;font-family:'Liberation Sans', sans-serif;font-size:14px;line-height:14px;font-weight:400;letter-spacing:0.291px;white-space:pre;">Кресло Dafna</div>
<div class="t" style="left:581.50px;top:484px;color:#23262e;font-family:'Liberation Sans', sans-serif;font-size:14px;line-height:14px;font-weight:400;letter-spacing:0.740px;white-space:pre;">Кресло</div>
<div class="t" style="left:724.70px;top:484px;color:#23262e;font-family:'Liberation Sans', sans-serif;font-size:14px;line-height:14px;font-weight:400;letter-spacing:0.000px;white-space:pre;">2</div>
<div class="t" style="left:871.60px;top:484px;color:#23262e;font-family:'Liberation Sans', sans-serif;font-size:14px;line-height:14px;font-weight:400;letter-spacing:0.000px;white-space:pre;">2</div>
<div class="t" style="left:1018.00px;top:484px;color:#23262e;font-family:'Liberation Sans', sans-serif;font-size:14px;line-height:14px;font-weight:400;letter-spacing:0.000px;white-space:pre;">0</div>
<div class="t" style="left:1136.00px;top:484px;color:#23262e;font-family:'Liberation Sans', sans-serif;font-size:14px;line-height:14px;font-weight:400;letter-spacing:0.000px;white-space:pre;">2</div>
<div class="t" style="left:1277.00px;top:484px;color:#23262e;font-family:'Liberation Sans', sans-serif;font-size:14px;line-height:14px;font-weight:400;letter-spacing:0.000px;white-space:pre;">0</div>
<div class="t" style="left:1406.50px;top:484px;color:#23262e;font-family:'Liberation Sans', sans-serif;font-size:14px;line-height:14px;font-weight:400;letter-spacing:0.000px;white-space:pre;">0</div>
<div class="t" style="left:1515.70px;top:484px;color:#23262e;font-family:'Liberation Sans', sans-serif;font-size:14px;line-height:14px;font-weight:400;letter-spacing:0.000px;white-space:pre;">0</div>
<div class="t" style="left:335.50px;top:539px;color:#3d68a8;font-family:'Liberation Sans', sans-serif;font-size:14px;line-height:14px;font-weight:400;letter-spacing:0.567px;white-space:pre;">Ноутбук</div>
<div class="t" style="left:574.50px;top:539px;color:#23262e;font-family:'Liberation Sans', sans-serif;font-size:14px;line-height:14px;font-weight:400;letter-spacing:0.757px;white-space:pre;">Ноутбуки</div>
<div class="t" style="left:1018.00px;top:539px;color:#23262e;font-family:'Liberation Sans', sans-serif;font-size:14px;line-height:14px;font-weight:400;letter-spacing:0.000px;white-space:pre;">0</div>
<div class="t" style="left:1277.00px;top:539px;color:#23262e;font-family:'Liberation Sans', sans-serif;font-size:14px;line-height:14px;font-weight:400;letter-spacing:0.000px;white-space:pre;">0</div>
<div class="t" style="left:1406.50px;top:539px;color:#23262e;font-family:'Liberation Sans', sans-serif;font-size:14px;line-height:14px;font-weight:400;letter-spacing:0.000px;white-space:pre;">0</div>
<div class="t" style="left:1515.70px;top:539px;color:#23262e;font-family:'Liberation Sans', sans-serif;font-size:14px;line-height:14px;font-weight:400;letter-spacing:0.000px;white-space:pre;">0</div>
</body></html>
